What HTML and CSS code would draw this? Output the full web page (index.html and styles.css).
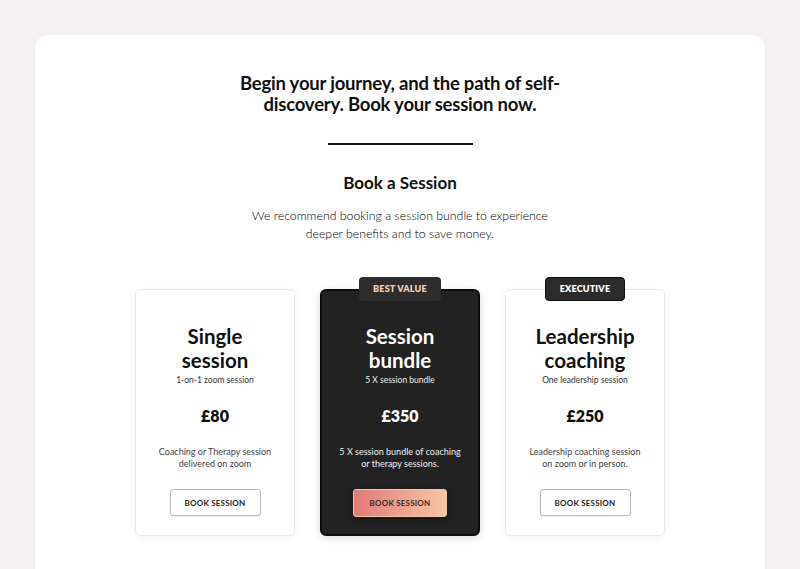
FILE: index.html
```html
<!DOCTYPE html>
<html>
<head>
<meta charset="utf-8">
<link rel="stylesheet" href="styles.css">
</head>
<body>
<main class="panel">
  <h1 class="headline">Begin your journey, and the path of self-<br>discovery. Book your session now.</h1>
  <hr class="divider">
  <h2 class="section-title">Book a Session</h2>
  <p class="intro">We recommend booking a session bundle to experience<br>deeper benefits and to save money.</p>
  <div class="cards">
    <div class="card">
      <h3 class="card-title">Single<br>session</h3>
      <div class="card-sub">1-on-1 zoom session</div>
      <div class="price">£80</div>
      <p class="desc">Coaching or Therapy session<br>delivered on zoom</p>
      <button class="btn">BOOK SESSION</button>
    </div>
    <div class="card card-dark">
      <div class="badge badge-best">BEST VALUE</div>
      <h3 class="card-title">Session<br>bundle</h3>
      <div class="card-sub">5 X session bundle</div>
      <div class="price">£350</div>
      <p class="desc">5 X session bundle of coaching<br>or therapy sessions.</p>
      <button class="btn btn-grad">BOOK SESSION</button>
    </div>
    <div class="card">
      <div class="badge badge-exec">EXECUTIVE</div>
      <h3 class="card-title">Leadership<br>coaching</h3>
      <div class="card-sub">One leadership session</div>
      <div class="price">£250</div>
      <p class="desc">Leadership coaching session<br>on zoom or in person.</p>
      <button class="btn">BOOK SESSION</button>
    </div>
  </div>
</main>
</body>
</html>
```
FILE: styles.css
```css
* { box-sizing: border-box; }
html, body { margin: 0; padding: 0; }
body {
  background: #f4eff0;
  font-family: Lato, "Noto Sans", sans-serif;
  color: #111;
  height: 569px;
  overflow: hidden;
}
.panel {
  margin: 35px 35px 0;
  background: #fff;
  border-radius: 14px;
  padding: 38px 0 60px;
  display: flex;
  flex-direction: column;
  align-items: center;
  min-height: 600px;
}
.headline {
  margin: 0;
  font-size: 18.5px;
  line-height: 21px;
  font-weight: 700;
  text-align: center;
  letter-spacing: -0.2px;
}
.divider {
  width: 145px;
  height: 2px;
  border: 0;
  background: #111;
  margin: 28px 0 0;
}
.section-title {
  margin: 27px 0 0;
  font-size: 17px;
  line-height: 22px;
  font-weight: 700;
}
.intro {
  margin: 13px 0 0;
  font-size: 12.3px;
  line-height: 18px;
  font-weight: 300;
  color: #000;
  text-align: center;
}
.cards {
  margin-top: 46px;
  display: flex;
  gap: 25px;
}
.card {
  position: relative;
  width: 160px;
  height: 247px;
  background: #fff;
  border: 1px solid #e9e9e9;
  border-radius: 6px;
  box-shadow: 0 2px 10px rgba(0,0,0,0.05);
  display: flex;
  flex-direction: column;
  align-items: center;
  padding-top: 34px;
  text-align: center;
}
.card-dark {
  background: #222;
  border: 2px solid #0c0c0c;
  color: #fff;
  padding-top: 33px;
  box-shadow: 0 2px 10px rgba(0,0,0,0.15);
}
.card-title {
  margin: 0;
  font-size: 20.5px;
  line-height: 24px;
  font-weight: 700;
}
.card-sub {
  margin-top: 2px;
  font-size: 8.5px;
  line-height: 12px;
  color: #333;
}
.card-dark .card-sub { color: #eee; }
.price {
  margin-top: 20px;
  font-size: 16px;
  line-height: 20px;
  font-weight: 800;
}
.desc {
  margin: 20px 0 0;
  font-size: 9px;
  line-height: 12px;
  font-weight: 400;
  color: #444;
}
.card-dark .desc { color: #eee; }
.btn {
  margin-top: 19px;
  width: 91px;
  height: 27px;
  border: 1px solid #bbb;
  border-radius: 3px;
  background: #fff;
  font-family: Lato, "Noto Sans", sans-serif;
  font-size: 8px;
  font-weight: 700;
  color: #222;
  letter-spacing: 0.2px;
  padding: 0;
  box-shadow: 0 1px 2px rgba(0,0,0,0.06);
}
.btn-grad {
  width: 94px;
  height: 28px;
  border: 1px solid #f3c8a8;
  background: linear-gradient(90deg, #e07a7a, #f6c7a2);
  color: #3a2a28;
  box-shadow: 0 2px 6px rgba(0,0,0,0.4);
}
.badge {
  position: absolute;
  top: -13px;
  left: 50%;
  transform: translateX(-50%);
  height: 24px;
  border-radius: 4px;
  font-size: 9px;
  font-weight: 800;
  line-height: 24px;
  letter-spacing: 0.2px;
}
.badge-best {
  width: 82px;
  background: #2d2d2d;
  color: #f3cdb0;
  top: -14px;
}
.badge-exec {
  width: 80px;
  background: #2b2b2b;
  color: #fff;
  border: 1px solid #111;
  line-height: 22px;
}
```
